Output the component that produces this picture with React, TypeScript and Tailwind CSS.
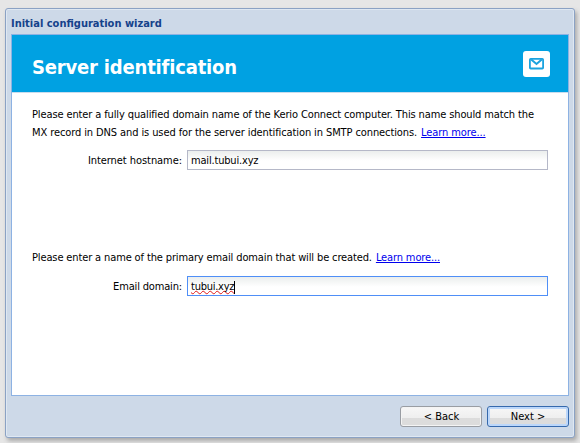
import type { ReactNode } from "react";

function Field({ label, labelClass, focused, children }: { label: string; labelClass: string; focused?: boolean; children: ReactNode }) {
  return (
    <div className="flex h-5 items-center">
      <div className="flex w-[150px] shrink-0 justify-end pt-px">
        <label className={`whitespace-nowrap ${labelClass}`}>{label}</label>
      </div>
      <div
        className={`ml-[5px] flex h-5 w-[361px] items-center border bg-linear-to-b from-[#ebeeed] from-0% to-white to-55% pt-0.5 pl-[3px] ${
          focused ? "border-[#4f8ff7]" : "border-[#b5b8c8]"
        }`}
      >
        {children}
      </div>
    </div>
  );
}

function MailIcon() {
  return (
    <span className="flex h-[26px] w-[27px] items-center justify-center rounded-[3px] bg-white">
      <svg width="17" height="13" viewBox="0 0 17 13" fill="none" stroke="#1ba3df">
        <rect x="1.9" y="1.9" width="13.2" height="9.6" rx="0.8" strokeWidth="1.8" />
        <path d="M3.2 2.4 8.5 7 13.8 2.4" strokeWidth="2" />
      </svg>
    </span>
  );
}

export default function App() {
  return (
    <div className="h-[443px] w-[580px] overflow-hidden bg-[#e6e6e6] pt-2 pl-[5px] font-['DejaVu_Sans_Condensed','DejaVu_Sans',sans-serif] text-[11px] text-black [font-stretch:condensed]">
      <div className="flex h-[430px] w-[570px] flex-col rounded-[3px] border border-[#8ba2c4] bg-[#cdd9e8] px-[5px] shadow-[inset_0_0_0_1px_#dfe8f2,2px_3px_4px_#aaa]">
        <div className="flex h-[25px] items-center pt-1.5">
          <h1 className="whitespace-nowrap text-[11px] font-bold text-[#15428b]">Initial configuration wizard</h1>
        </div>
        <main className="h-[362px] w-[558px] shrink-0 border border-[#8db2e3] bg-white">
          <header className="flex h-[58px] items-center justify-between border-b border-[#c9dced] bg-[#00a1e2] pr-[18px] pl-5">
            <h2 className="pt-1.5 text-[20px] font-bold tracking-[-0.18px] whitespace-nowrap text-white">Server identification</h2>
            <MailIcon />
          </header>
          <div className="flex flex-col pt-[13px] pl-5 leading-[18px]">
            <p className="tracking-[-0.12px] whitespace-nowrap">Please enter a fully qualified domain name of the Kerio Connect computer. This name should match the</p>
            <p className="flex gap-1 tracking-[-0.1px] whitespace-nowrap">
              <span>MX record in DNS and is used for the server identification in SMTP connections.</span>
              <a className="text-[#0000ee] underline" href="#">Learn more...</a>
            </p>
            <div className="pt-2">
              <Field label="Internet hostname:" labelClass="tracking-[-0.06px]">
                <span className="tracking-[-0.18px]">mail.tubui.xyz</span>
              </Field>
            </div>
            <p className="mt-[79px] flex gap-1 tracking-[-0.13px] whitespace-nowrap">
              <span>Please enter a name of the primary email domain that will be created.</span>
              <a className="text-[#0000ee] underline" href="#">Learn more...</a>
            </p>
            <div className="pt-[9px]">
              <Field label="Email domain:" labelClass="tracking-[-0.16px]" focused>
                <span className="tracking-[-0.25px] underline decoration-[#e01818] decoration-wavy decoration-1 underline-offset-0 [text-decoration-skip-ink:none]">tubui.xyz</span>
                <span className="h-[13px] w-px bg-black" />
              </Field>
            </div>
          </div>
        </main>
        <footer className="flex justify-end gap-[5px] pt-[10px]">
          <button className="h-[21px] w-[82px] rounded-[3px] border border-[#999da3] bg-linear-to-b from-[#f7f7f7] from-0% via-[#eeeeee] via-60% to-[#dcdcdc] to-60% pt-px pl-px shadow-[inset_0_0_0_1px_#f4f4f4]">&lt; Back</button>
          <button className="h-[21px] w-[82px] rounded-[3px] border border-[#3569ad] bg-linear-to-b from-[#f7f7f7] from-0% via-[#eeeeee] via-60% to-[#dcdcdc] to-60% pt-px shadow-[inset_0_0_0_2px_#bcd7fa]">Next &gt;</button>
        </footer>
      </div>
    </div>
  );
}
